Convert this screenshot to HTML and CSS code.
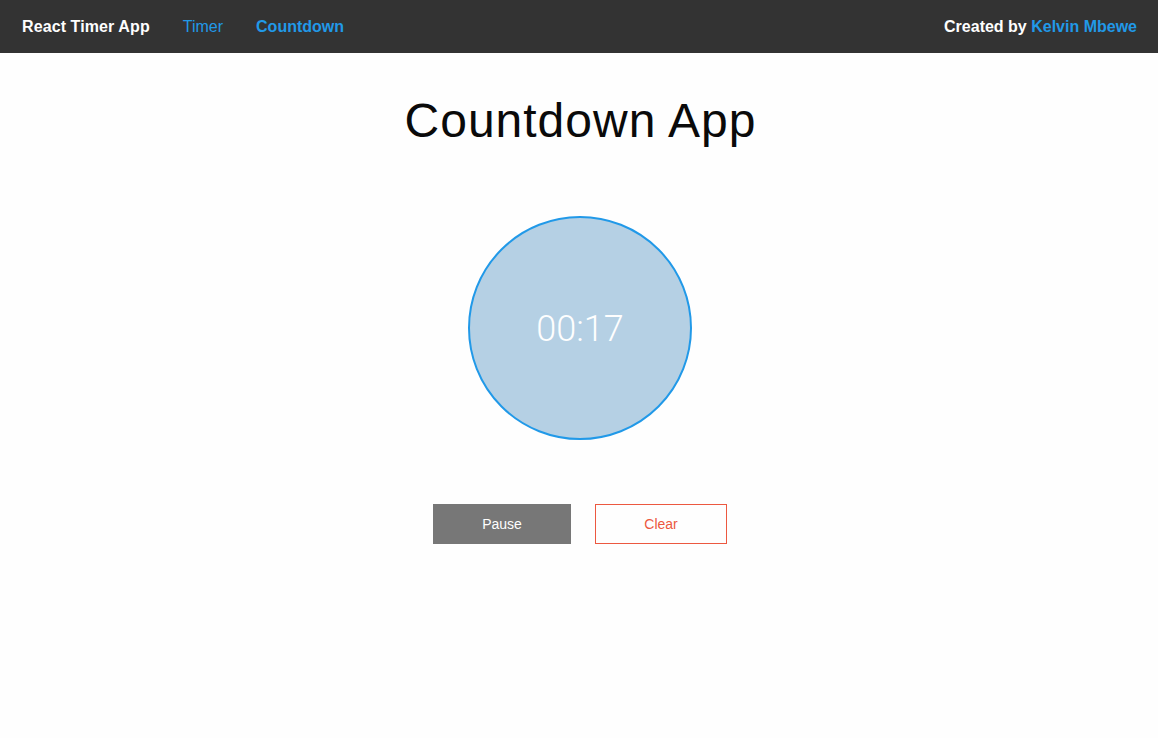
FILE: index.html
```html
<!DOCTYPE html>
<html>
<head>
<meta charset="utf-8">
<link rel="stylesheet" href="styles.css">
</head>
<body>
<div class="topbar">
  <div class="left">
    <span class="brand">React Timer App</span>
    <a class="nav">Timer</a>
    <a class="nav active">Countdown</a>
  </div>
  <div class="right">Created by <a class="author">Kelvin Mbewe</a></div>
</div>
<main class="main">
  <h1 class="title">Countdown App</h1>
  <div class="clock"><span class="clock-text">00:17</span></div>
  <div class="controls">
    <button class="btn pause">Pause</button>
    <button class="btn clear">Clear</button>
  </div>
</main>
</body>
</html>
```
FILE: styles.css
```css
* { box-sizing: border-box; }
html, body { margin: 0; padding: 0; }
body {
  background: #fefefe;
  font-family: "Liberation Sans", Arial, sans-serif;
  color: #0a0a0a;
  height: 738px;
}
.topbar {
  height: 53px;
  background: #333333;
  display: flex;
  align-items: center;
  justify-content: space-between;
  padding: 0 21px 0 22px;
  font-size: 16px;
}
.left { display: flex; align-items: center; }
.brand { color: #fefefe; font-weight: bold; margin-right: 33px; letter-spacing: 0.1px; }
.nav { color: #2199e8; margin-right: 33px; }
.nav.active { font-weight: bold; }
.right { color: #fefefe; font-weight: bold; }
.author { color: #2199e8; }
.main {
  display: flex;
  flex-direction: column;
  align-items: center;
}
.title {
  margin: 40px 0 0 3px;
  font-size: 48px;
  font-weight: normal;
  line-height: 56px;
  letter-spacing: 1px;
}
.clock {
  margin: 67px 0 0 2px;
  width: 224px;
  height: 224px;
  border-radius: 50%;
  border: 2px solid #2199e8;
  background: #b5d0e4;
  display: flex;
  align-items: center;
  justify-content: center;
}
.clock-text {
  color: #fefefe;
  font-family: Roboto, "Liberation Sans", sans-serif;
  font-size: 36px;
  font-weight: 300;
  padding-top: 2px;
}
.controls {
  margin-top: 64px;
  display: flex;
  gap: 24px;
  padding-left: 2px;
}
.btn {
  height: 40px;
  font-family: "Liberation Sans", Arial, sans-serif;
  font-size: 14px;
  border: 1px solid transparent;
  border-radius: 0;
}
.pause {
  width: 138px;
  background: #777777;
  color: #fefefe;
}
.clear {
  width: 132px;
  background: transparent;
  border-color: #ec5840;
  color: #ec5840;
}
```
